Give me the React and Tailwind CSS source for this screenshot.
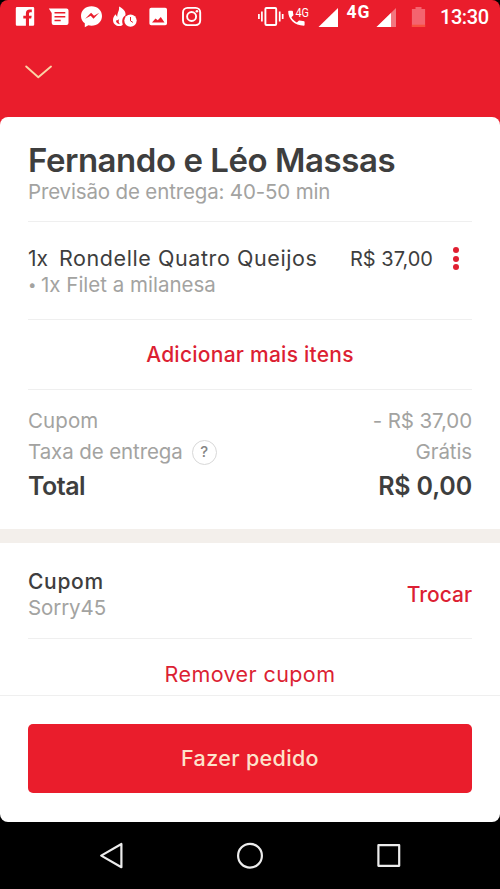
import React from 'react';

const cupom = { codigo: 'Sorry45', valor: '- R$ 37,00' };

function StatusBar() {
  return (
    <div className="flex h-[34px] items-start text-white">
      <svg className="h-[34px] w-[250px]" viewBox="0 0 250 34" fill="currentColor">
        {/* facebook */}
        <path fillRule="evenodd" d="M17 7h16a1.2 1.2 0 0 1 1.2 1.2v16.4a1.2 1.2 0 0 1-1.2 1.2h-4v-7.200h2.200l.5-2.900h-2.700v-1.900c0-.9.4-1.500 1.500-1.500h1.300V9.600h-2.100c-2.500 0-3.800 1.500-3.800 3.800v2.300h-2.600v2.900h2.600v7.200H17a1.200 1.200 0 0 1-1.200-1.200V8.200A1.200 1.200 0 0 1 17 7z" />
        {/* messages */}
        <path fillRule="evenodd" d="M48.800 8.600H66.500a2 2 0 0 1 2 2v12.300a2 2 0 0 1-2 2H53.700a2 2 0 0 1-2-2V13zM54.500 12v1.500h10.800V12zM54.500 15.900v1.500h10.800v-1.500zM54.500 19.800v1.500h6.200v-1.500z" />
        {/* messenger */}
        <path fillRule="evenodd" d="M91.500 6.200c6 0 10.500 4.100 10.500 9.700s-4.500 9.800-10.500 9.800c-1.100 0-2.100-.1-3.100-.4l-3.600 2v-4c-2.300-1.800-3.800-4.400-3.800-7.400 0-5.600 4.500-9.700 10.500-9.700zM85.200 18.800l5.500-3 2.800 2.900 5.700-5.900-5.200 2.900-2.900-2.900z" />
        {/* tinder + clock */}
        <path fillRule="evenodd" d="M119 6.500c4.200 2.100 7 5 6.500 8.700-2.700 1.500-4.100 5-2.700 9.400-.7 1-2 1.500-3.300 1.500-3.900 0-6.500-2.600-6.500-6.100 0-2.400 1.200-4.500 2.900-5.800.1 1.200.6 2.100 1.400 2.500-.3-3.500 2.400-6 1.700-10.200zM116 20.500c0 2 1.500 3.500 4 3.800-2-1.700-1.500-4.400-.3-6-.6 1.200-2 2.300-3.700 2.200z" />
        <circle cx="130.500" cy="20.600" r="6.200" />
        <path d="M130.500 17v3.900l2.400 1.500" fill="none" stroke="#ea1d2c" />
        {/* gallery */}
        <path fillRule="evenodd" d="M151.200 7.700h14a1.800 1.800 0 0 1 1.800 1.800v14a1.800 1.800 0 0 1-1.800 1.800h-14a1.800 1.800 0 0 1-1.800-1.800v-14a1.800 1.800 0 0 1 1.800-1.800zM152 22.500h12.500l-3.700-5.500-3 3.300-2.300-1.800z" />
        {/* instagram */}
        <g fill="none" stroke="currentColor" strokeWidth="1.900">
          <rect x="183" y="7.900" width="17.200" height="17.200" rx="4.500" />
          <circle cx="191.600" cy="16.500" r="4.500" />
        </g>
        <circle cx="196.900" cy="11.300" r="1.300" />
      </svg>
      <svg className="h-[34px] w-[250px]" viewBox="250 0 250 34" fill="currentColor">
        {/* vibrate */}
        <rect x="265.400" y="8" width="10.800" height="17" rx="1" fill="none" stroke="currentColor" strokeWidth="1.900" />
        <path d="M258.900 14v5M261.900 11.500v10M279.700 11.500v10M282.700 14v5" stroke="currentColor" strokeWidth="1.700" />
        {/* 4G call */}
        <path d="M289 10.800h3.100c.5 0 .8.300.8.800 0 1 .2 2 .5 3 .1.300 0 .6-.2.800l-1.800 1.900c1.300 2.400 3.100 4 5.500 5.300l1.800-1.900c.2-.2.500-.3.800-.2 1 .3 2.100.5 3.300.5.5 0 1.800.3 1.800.8v3c0 .5-.3.900-.8.900-9.200 0-15.600-6.500-15.600-14.100 0-.5.300-.8.800-.8z" />
        <text x="295.500" y="17" fontSize="12" textLength="13.500" lengthAdjust="spacingAndGlyphs" fontFamily="Roboto, sans-serif">4G</text>
        <path d="M338 8v19h-19.500z" />
        <text x="346.500" y="18.300" fontSize="17.500" fontWeight="700" textLength="23" fontFamily="Roboto, sans-serif">4G</text>
        <path d="M396 8v19h-19.500z" opacity=".4" />
        <path d="M391 13v14h-14.500z" />
        {/* battery */}
        <path d="M415.500 7h6v2.100h3.600V27h-13.200V9.100h3.600z" fill="#f4646f" />
        <path d="M411.900 24.700h13.200V27h-13.200z" fill="#f9503f" />
        <text x="440" y="24.200" fontSize="20" fontWeight="500" textLength="49" fontFamily="Roboto, sans-serif">13:30</text>
      </svg>
    </div>
  );
}

function Linha({ label, valor, children }) {
  return (
    <div className="flex h-[31px] items-center justify-between text-[20.5px] text-[#a3a3a1]">
      <div className="flex items-center">
        {label}
        {children}
      </div>
      <span className="-tracking-[0.1px]">{valor}</span>
    </div>
  );
}

function NavBar() {
  return (
    <div className="flex h-[67px] items-center justify-center bg-black">
      <svg className="h-[67px] w-[320px]" viewBox="90 822 320 67" fill="none" stroke="#ececec" strokeWidth="2.200" strokeLinejoin="round">
        <path d="M121.400 844v23.200l-20.200-11.600z" />
        <circle cx="250" cy="855.700" r="11.900" />
        <rect x="378.400" y="845.200" width="20.800" height="20.600" />
      </svg>
    </div>
  );
}

function App() {
  return (
    <div className="flex h-[889px] w-[500px] flex-col overflow-hidden bg-black font-['Inter',sans-serif] whitespace-nowrap">
      {/* Header */}
      <header className="h-[127px] shrink-0 rounded-t-[8px] bg-[#ea1d2c]">
        <StatusBar />
        <svg className="mt-[30px] ml-6 h-4 w-7" viewBox="0 0 28 16" fill="none" stroke="#fbd3a6" strokeWidth="1.900" strokeLinecap="round" strokeLinejoin="round">
          <path d="M2.200 2.500 14.300 13.200 27 2.500" />
        </svg>
      </header>

      {/* Order sheet */}
      <main className="-mt-[10px] flex h-[705px] shrink-0 flex-col rounded-[8px] bg-white text-[#3e3e3e]">
        <section className="mx-7 h-[105px] border-b border-[#efefef] pt-[24px]">
          <h1 className="text-[33px] leading-[38px] font-semibold tracking-[-0.460px]">Fernando e Léo Massas</h1>
          <p className="text-[20.5px] leading-[25px] tracking-[-0.150px] text-[#a3a3a1]">Previsão de entrega: 40-50 min</p>
        </section>

        <section className="mx-7 h-[98px] border-b border-[#efefef] pt-[23px]">
          <div className="flex h-[27px] items-center text-[21px]">
            <span className="w-[31px]">1x</span>
            <span className="flex-1 text-[21.5px] tracking-[0.580px]">Rondelle Quatro Queijos</span>
            <span className="text-[20px]">R$ 37,00</span>
            <button className="ml-[20px] flex w-[6px] flex-col gap-[2.500px]">
              <span className="size-[6px] rounded-full bg-[#e01f31]" />
              <span className="size-[6px] rounded-full bg-[#e01f31]" />
              <span className="size-[6px] rounded-full bg-[#e01f31]" />
            </button>
            <span className="w-[13px]" />
          </div>
          <p className="flex items-center text-[20.5px] leading-[26px] text-[#a3a3a1]">
            <span className="w-[13px] text-[15px]">•</span>
            <span>1x Filet a milanesa</span>
          </p>
        </section>

        <button className="mx-7 h-[70px] border-b border-[#efefef] pt-px text-[21px] text-[#dc1f33]">
          <span className="font-medium tracking-[0.250px]">Adicionar mais itens</span>
        </button>

        <section className="mx-7 h-[139px] pt-[16px]">
          <Linha label={<span className="tracking-[0.1px]">Cupom</span>} valor={cupom.valor} />
          <Linha label={<span className="-tracking-[0.1px]">Taxa de entrega</span>} valor="Grátis">
            <span className="ml-[9px] flex size-[25px] items-center justify-center rounded-full border-[1.500px] border-[#d8d8d8] text-[15px] font-medium text-[#858585]">?</span>
          </Linha>
          <div className="flex h-[38px] items-center justify-between text-[25px] font-semibold">
            <span className="tracking-[-0.5px]">Total</span>
            <span className="tracking-[-0.150px]">R$ 0,00</span>
          </div>
        </section>

        <div className="h-[14px] bg-[#f3efeb]" />

        <section className="mx-7 flex h-[96px] items-center justify-between border-b border-[#efefef] pt-[8px]">
          <div>
            <p className="text-[21px] leading-[26px] font-medium tracking-[0.7px]">Cupom</p>
            <p className="text-[20.5px] leading-[26px] text-[#a3a3a1] -tracking-[0.1px]">{cupom.codigo}</p>
          </div>
          <button className="text-[21px] font-medium text-[#dc1f33]">Trocar</button>
        </section>

        <button className="h-[57px] border-b border-[#efefef] pt-[14px] text-[21.5px] text-[#dc1f33]">
          <span className="tracking-[0.4px]">Remover cupom</span>
        </button>

        <button className="mx-7 mt-[28px] h-[69px] rounded-[5px] bg-[#ea1d2c] text-[21.5px] font-medium text-[#fde3cb]">
          <span className="tracking-[0.350px]">Fazer pedido</span>
        </button>
      </main>

      <NavBar />
    </div>
  );
}

export default App;
